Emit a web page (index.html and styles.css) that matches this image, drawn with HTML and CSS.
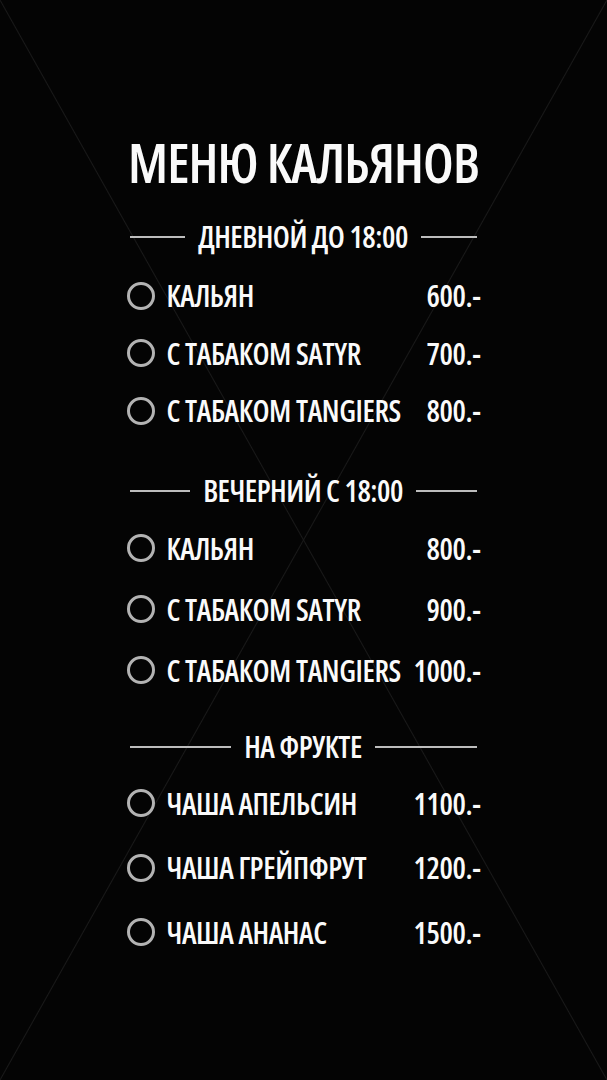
FILE: index.html
```html
<!DOCTYPE html>
<html lang="ru">
<head>
  <meta charset="UTF-8" />
  <meta name="viewport" content="width=device-width, initial-scale=1.0" />
  <title>Меню кальянов</title>
  <link rel="stylesheet" href="styles.css">
</head>
<body>
  <div class="poster">
    <h1 class="title">МЕНЮ КАЛЬЯНОВ</h1>

    <section class="menu-section day">
      <div class="section-head">
        <span class="rule"></span>
        <h2>ДНЕВНОЙ ДО 18:00</h2>
        <span class="rule"></span>
      </div>
      <ul class="items">
        <li class="item"><span class="dot"></span><span class="name">КАЛЬЯН</span><span class="price">600.-</span></li>
        <li class="item"><span class="dot"></span><span class="name">С ТАБАКОМ SATYR</span><span class="price">700.-</span></li>
        <li class="item"><span class="dot"></span><span class="name">С ТАБАКОМ TANGIERS</span><span class="price">800.-</span></li>
      </ul>
    </section>

    <section class="menu-section evening">
      <div class="section-head">
        <span class="rule"></span>
        <h2>ВЕЧЕРНИЙ С 18:00</h2>
        <span class="rule"></span>
      </div>
      <ul class="items">
        <li class="item"><span class="dot"></span><span class="name">КАЛЬЯН</span><span class="price">800.-</span></li>
        <li class="item"><span class="dot"></span><span class="name">С ТАБАКОМ SATYR</span><span class="price">900.-</span></li>
        <li class="item"><span class="dot"></span><span class="name">С ТАБАКОМ TANGIERS</span><span class="price">1000.-</span></li>
      </ul>
    </section>

    <section class="menu-section fruit">
      <div class="section-head">
        <span class="rule"></span>
        <h2>НА ФРУКТЕ</h2>
        <span class="rule"></span>
      </div>
      <ul class="items">
        <li class="item"><span class="dot"></span><span class="name">ЧАША АПЕЛЬСИН</span><span class="price">1100.-</span></li>
        <li class="item"><span class="dot"></span><span class="name">ЧАША ГРЕЙПФРУТ</span><span class="price">1200.-</span></li>
        <li class="item"><span class="dot"></span><span class="name">ЧАША АНАНАС</span><span class="price">1500.-</span></li>
      </ul>
    </section>
  </div>
</body>
</html>
```
FILE: styles.css
```css
html, body {
  margin: 0;
  background: #040404;
}
.poster {
  width: 607px;
  min-height: 1080px;
  box-sizing: border-box;
  padding-top: 132px;
  color: #fafafa;
  font-family: 'Open Sans', 'Liberation Sans', sans-serif;
  font-stretch: 75%;
  font-weight: 600;
  background:
    linear-gradient(to bottom right, transparent calc(50% - 1px), #191919 50%, transparent calc(50% + 1px)),
    linear-gradient(to bottom left, transparent calc(50% - 1px), #191919 50%, transparent calc(50% + 1px)),
    #040404;
}
.title {
  margin: 0;
  height: 60px;
  line-height: 60px;
  font-size: 54px;
  font-weight: 650;
  letter-spacing: -0.9px;
  text-align: center;
}
.menu-section {
  width: 354px;
  margin: 25px auto 0;
}
.menu-section.day { --row: 57.5px; --head-gap: 10px; }
.menu-section.evening { --row: 61px; --head-gap: 6.5px; margin-top: 31.5px; }
.menu-section.fruit { --row: 64.5px; --head-gap: 4px; margin-top: 26.5px; }
.section-head {
  display: flex;
  align-items: center;
  gap: 13px;
  height: 40px;
  margin: 0 4px var(--head-gap) 3px;
}
.section-head h2 {
  margin: 0;
  font-size: 30px;
  font-weight: 650;
  letter-spacing: -0.5px;
  line-height: 40px;
  white-space: nowrap;
}
.rule {
  flex: 1;
  height: 2px;
  background: #bdbdbd;
}
.items {
  list-style: none;
  margin: 0;
  padding: 0;
}
.item {
  display: flex;
  align-items: center;
  height: var(--row);
  font-size: 30px;
  font-weight: 650;
  letter-spacing: -0.4px;
  white-space: nowrap;
}
.dot {
  width: 22px;
  height: 22px;
  border: 3px solid #b3b3b3;
  border-radius: 50%;
  margin: 0 12px 0 0;
  flex-shrink: 0;
}
.price {
  margin-left: auto;
}
```
